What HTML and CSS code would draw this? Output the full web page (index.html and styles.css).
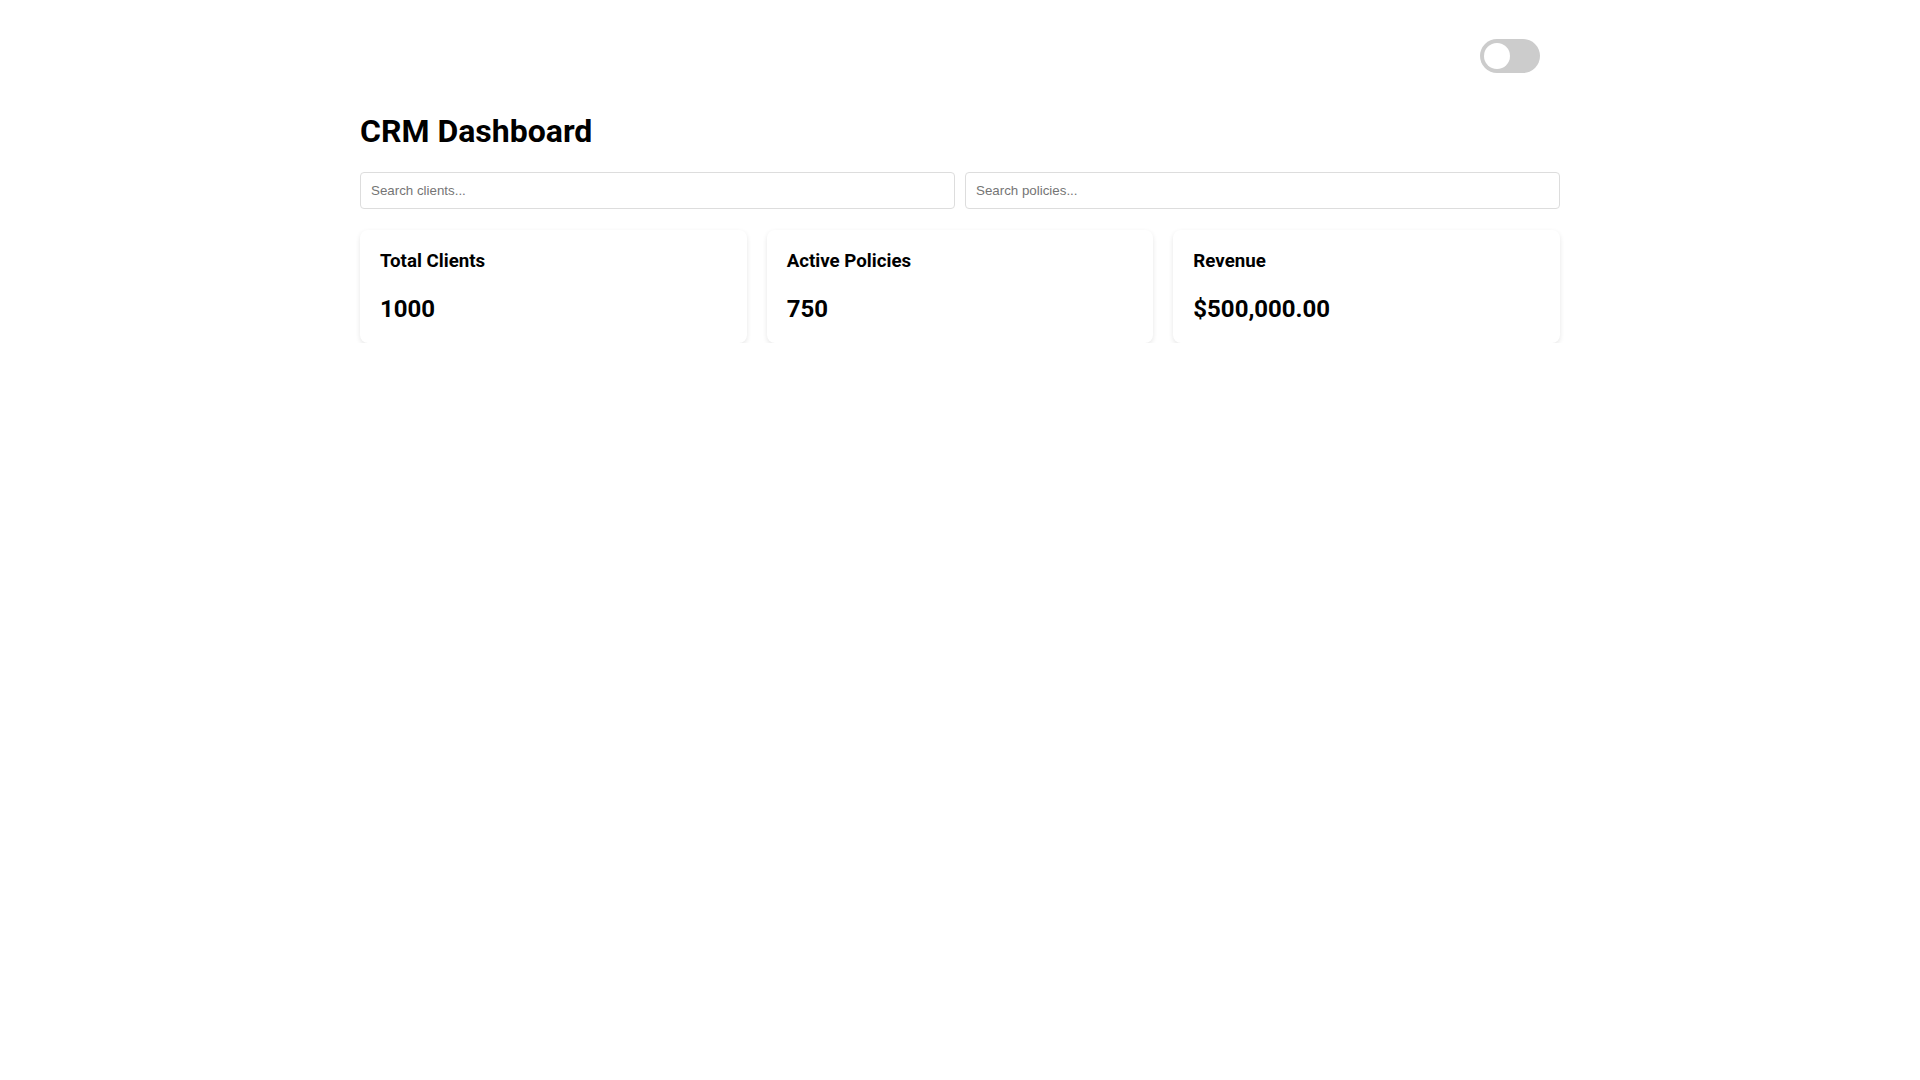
FILE: index.html
```html
<!DOCTYPE html>
<html lang="en">
<head>
    <meta charset="UTF-8">
    <meta name="viewport" content="width=device-width, initial-scale=1.0">
    <title>CRM Dashboard</title>
    <link rel="stylesheet" href="styles.css">
</head>
<body>
    <div class="page">
        <div class="topbar">
            <label class="switch">
                <input type="checkbox" id="theme">
                <span class="slider"></span>
            </label>
        </div>

        <h1>CRM Dashboard</h1>

        <div class="search-row">
            <input type="text" class="search" placeholder="Search clients...">
            <input type="text" class="search" placeholder="Search policies...">
        </div>

        <div class="cards">
            <div class="card">
                <h3>Total Clients</h3>
                <p class="value">1000</p>
            </div>
            <div class="card">
                <h3>Active Policies</h3>
                <p class="value">750</p>
            </div>
            <div class="card">
                <h3>Revenue</h3>
                <p class="value">$500,000.00</p>
            </div>
        </div>
    </div>
</body>
</html>
```

FILE: styles.css
```css
* { box-sizing: border-box }
body { margin: 0; background: #fff; color: #000; font-family: Roboto, "Liberation Sans", sans-serif; }
.page { max-width: 1200px; margin: 0 auto; padding-top: 39px; }

.topbar { display: flex; justify-content: flex-end; padding-right: 20px; height: 34px; }
.switch { position: relative; display: inline-block; width: 60px; height: 34px; }
.switch input { opacity: 0; width: 0; height: 0; }
.slider { position: absolute; inset: 0; background: #ccc; border-radius: 34px; cursor: pointer; }
.slider::before {
    content: "";
    position: absolute;
    left: 4px; top: 4px;
    width: 26px; height: 26px;
    background: #fff;
    border-radius: 50%;
}

h1 { font-size: 32px; font-weight: 700; margin: 39px 0 22px; }

.search-row { display: flex; gap: 10px; margin-bottom: 21px; }
.search {
    flex: 1;
    padding: 10px;
    border: 1px solid #ddd;
    border-radius: 4px;
    font-family: "Liberation Sans", Arial, sans-serif;
    font-size: 13.33px;
}
.search::placeholder { color: #757575; }

.cards { display: grid; grid-template-columns: repeat(3, 1fr); gap: 20px; }
.card {
    background: #fff;
    border-radius: 8px;
    padding: 20px;
    box-shadow: 0 2px 5px rgba(0,0,0,0.1);
}
.card h3 { margin: 0 0 23px; font-size: 18.72px; font-weight: 700; }
.value { margin: 0; font-size: 24px; font-weight: 700; }
```
